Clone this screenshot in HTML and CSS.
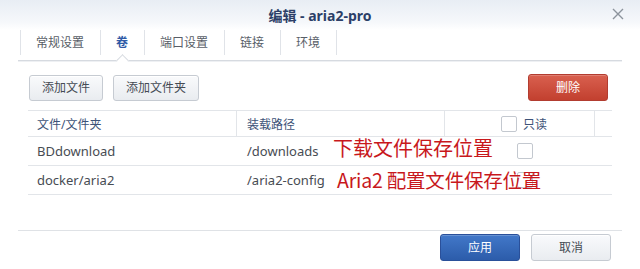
FILE: index.html
```html
<!DOCTYPE html>
<html lang="zh-CN">
<head>
<meta charset="utf-8">
<title>编辑 - aria2-pro</title>
<link rel="stylesheet" href="styles.css">
</head>
<body>
<div class="dialog">
  <header class="titlebar">
    <span class="side"></span>
    <h1 class="title">编辑 - aria2-pro</h1>
    <span class="side side-right">
      <button class="close" aria-label="关闭">
        <svg width="12" height="12" viewBox="0 0 12 12"><path d="M1 1L11 11M11 1L1 11" stroke="#8c939c" stroke-width="1.4" fill="none"/></svg>
      </button>
    </span>
  </header>

  <nav class="tabs">
    <div class="tab">常规设置</div>
    <div class="tab active">卷</div>
    <div class="tab">端口设置</div>
    <div class="tab">链接</div>
    <div class="tab last">环境</div>
  </nav>

  <main class="content">
    <div class="toolbar">
      <div class="toolbar-left">
        <button class="btn">添加文件</button>
        <button class="btn">添加文件夹</button>
      </div>
      <button class="btn btn-danger">删除</button>
    </div>

    <div class="grid">
      <div class="row head">
        <div class="cell">文件/文件夹</div>
        <div class="cell">装载路径</div>
        <div class="cell ro-head"><span class="checkbox"></span><span>只读</span></div>
        <div class="cell last"></div>
      </div>
      <div class="row">
        <div class="cell">BDdownload</div>
        <div class="cell">/downloads</div>
        <div class="cell ro-cell"><span class="checkbox"></span></div>
        <div class="cell last"></div>
      </div>
      <div class="row">
        <div class="cell">docker/aria2</div>
        <div class="cell">/aria2-config</div>
        <div class="cell ro-cell"><span class="checkbox"></span></div>
        <div class="cell last"></div>
      </div>
      <div class="note note-1">下载文件保存位置</div>
      <div class="note note-2">Aria2 配置文件保存位置</div>
    </div>
  </main>

  <footer class="footer">
    <button class="btn btn-primary">应用</button>
    <button class="btn btn-wide">取消</button>
  </footer>
</div>
</body>
</html>
```

FILE: styles.css
```css
* { box-sizing: border-box; }

html, body {
  margin: 0;
  padding: 0;
  background: #fff;
}

body {
  width: 640px;
  height: 269px;
  overflow: hidden;
  font-family: "Noto Sans", "Noto Sans CJK SC", sans-serif;
  color: #4a4f57;
}

.dialog {
  height: 269px;
  display: flex;
  flex-direction: column;
}

.titlebar {
  height: 30px;
  flex: none;
  display: grid;
  grid-template-columns: 1fr auto 1fr;
  align-items: center;
  background: linear-gradient(#e8edf4, #f6f8fb 75%, #ffffff);
}

.title {
  margin: 0;
  font-size: 14px;
  font-weight: 700;
  color: #2c3f68;
  line-height: 30px;
  position: relative;
  top: 1px;
}

.side-right {
  display: flex;
  justify-content: flex-end;
  padding-right: 16px;
}

.close {
  border: 0;
  background: transparent;
  padding: 0;
  width: 12px;
  height: 12px;
  display: block;
  position: relative;
  top: -1px;
}

.close svg { display: block; }

.tabs {
  flex: none;
  margin: 0 18px;
  padding-left: 2px;
  height: 31px;
  display: flex;
  align-items: flex-start;
  border-bottom: 1px solid #d6dae0;
  box-shadow: 0 1px 0 #eef0f3;
}

.tab {
  position: relative;
  height: 25px;
  line-height: 25px;
  padding: 0 16px 0 15px;
  border-left: 1px solid #e0e3e8;
  font-size: 12px;
  color: #585e67;
}

.tab.last { border-right: 1px solid #e0e3e8; }

.tab.active {
  color: #2f5aa6;
  font-weight: 700;
}

.tab.active::after {
  content: "";
  position: absolute;
  left: 50%;
  bottom: -10px;
  width: 8px;
  height: 8px;
  margin-left: -5px;
  background: #fff;
  border-left: 1px solid #d6dae0;
  border-top: 1px solid #d6dae0;
  transform: rotate(45deg);
}

.content {
  flex: 1;
  padding: 0 28px;
}

.toolbar {
  margin-top: 13px;
  padding: 0 4px 0 1px;
  display: flex;
  justify-content: space-between;
  align-items: flex-end;
}

.toolbar-left {
  display: flex;
  gap: 10px;
}

.btn {
  font-family: "Noto Sans", "Noto Sans CJK SC", sans-serif;
  font-size: 12px;
  color: #454b54;
  height: 26px;
  line-height: 24px;
  padding: 0 12px;
  border: 1px solid #c6cbd2;
  border-radius: 3px;
  background: linear-gradient(#f9fafc, #e9ecf0);
  box-shadow: inset 0 1px 0 #ffffff;
}

.btn-danger {
  height: 27px;
  width: 80px;
  color: #fff;
  border-color: #b23c30;
  background: linear-gradient(#d9604f, #c2402f);
  box-shadow: inset 0 1px 0 rgba(255,255,255,0.2);
}

.btn-primary {
  height: 27px;
  width: 80px;
  color: #fff;
  border-color: #2a509a;
  background: linear-gradient(#4278c9, #2c5caa);
  box-shadow: inset 0 1px 0 rgba(255,255,255,0.2);
}

.btn-wide {
  height: 27px;
  width: 80px;
}

.grid {
  position: relative;
  margin-top: 9px;
  border-top: 1px solid #e2e5e9;
}

.row {
  display: grid;
  grid-template-columns: 209px 208px 150px 1fr;
  height: 29px;
  border-bottom: 1px solid #e2e5e9;
  font-size: 13px;
  color: #474c53;
}

.row.head {
  height: 26px;
  font-size: 12px;
  color: #3d5378;
}

.cell {
  display: flex;
  align-items: center;
  padding-left: 9px;
  white-space: nowrap;
}

.row .cell:nth-child(2) { padding-left: 10px; }

.row.head .cell { border-right: 1px solid #e2e5e9; }
.row.head .cell.last { border-right: 0; }

.ro-head { padding-left: 56px !important; gap: 6px; }
.ro-cell { padding-left: 72px !important; }

.checkbox {
  display: inline-block;
  width: 16px;
  height: 16px;
  border: 1px solid #c3c8cf;
  border-radius: 2px;
  background: #fff;
}

.note {
  position: absolute;
  color: #c8181c;
  font-family: "Noto Sans CJK SC", "Noto Sans", sans-serif;
  line-height: 24px;
  white-space: nowrap;
}

.note-1 {
  left: 305px;
  top: 25px;
  font-size: 20px;
}

.note-2 {
  left: 309px;
  top: 57px;
  font-size: 19.5px;
  letter-spacing: -0.2px;
}

.footer {
  flex: none;
  margin: 0 18px;
  border-top: 1px solid #dfe2e6;
  padding: 3px 11px 8px 0;
  display: flex;
  justify-content: flex-end;
  gap: 11px;
}
```
